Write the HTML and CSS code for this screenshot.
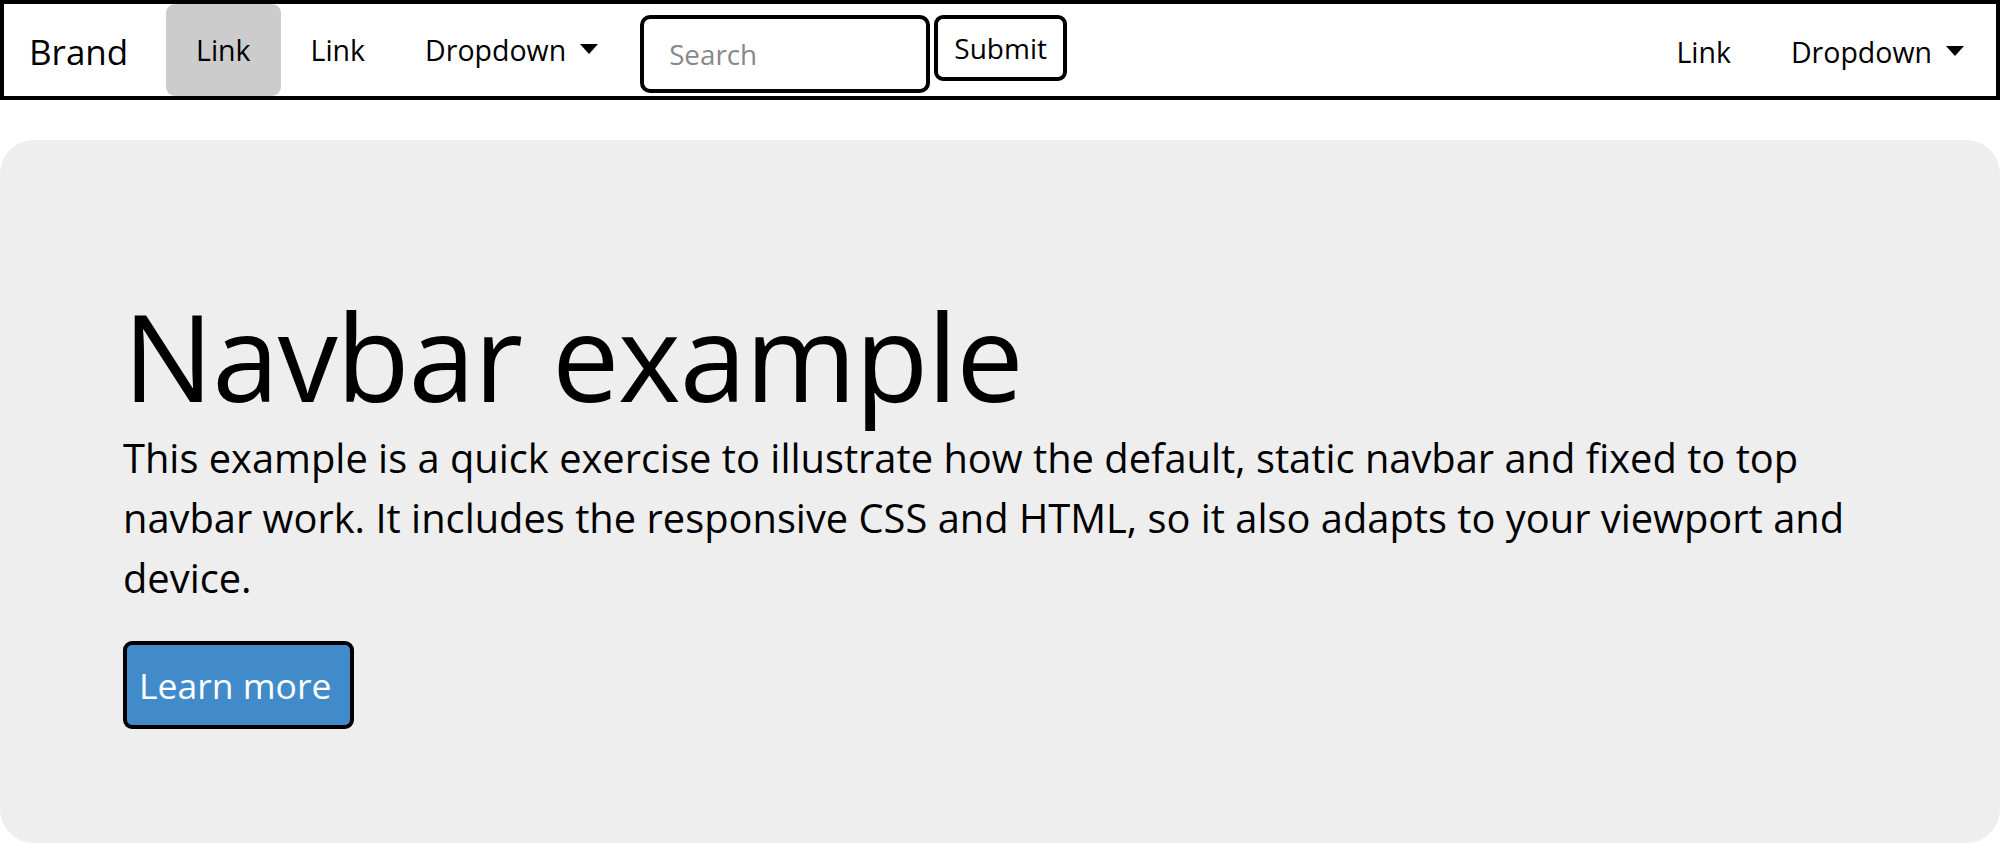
FILE: index.html
```html
<!DOCTYPE html>
<html lang="en">
<head>
<meta charset="utf-8">
<title>Navbar example</title>
<link rel="stylesheet" href="styles.css">
</head>
<body>
<nav class="navbar">
  <a class="brand" href="#">Brand</a>
  <ul class="nav">
    <li><a class="nav-link active" href="#">Link</a></li>
    <li><a class="nav-link" href="#">Link</a></li>
    <li><a class="nav-link dropdown" href="#">Dropdown<span class="caret"></span></a></li>
  </ul>
  <form class="search-form">
    <input class="search-input" type="text" placeholder="Search">
    <button class="submit-btn" type="button">Submit</button>
  </form>
  <ul class="nav nav-right">
    <li><a class="nav-link" href="#">Link</a></li>
    <li><a class="nav-link dropdown" href="#">Dropdown<span class="caret"></span></a></li>
  </ul>
</nav>
<main class="jumbotron">
  <h1 class="title">Navbar example</h1>
  <p class="lead">This example is a quick exercise to illustrate how the default, static navbar and fixed to top navbar work. It includes the responsive CSS and HTML, so it also adapts to your viewport and device.</p>
  <a class="learn-btn" href="#">Learn more</a>
</main>
</body>
</html>
```

FILE: styles.css
```css
html, body {
  margin: 0;
  padding: 0;
  background: #fff;
}

body {
  width: 2000px;
  font-family: "Open Sans", "Noto Sans", sans-serif;
  color: #000;
  overflow: hidden;
}

a {
  color: #000;
  text-decoration: none;
}

.navbar {
  box-sizing: border-box;
  display: flex;
  align-items: flex-start;
  height: 100px;
  border: 4px solid #000;
  padding-right: 2px;
  margin-bottom: 40px;
}

.brand {
  box-sizing: border-box;
  width: 162px;
  padding-left: 25px;
  padding-top: 4px;
  line-height: 88px;
  height: 92px;
  font-size: 35px;
}

.nav {
  display: flex;
  list-style: none;
  margin: 0;
  padding: 0;
}

.nav-link {
  display: flex;
  align-items: center;
  height: 92px;
  line-height: 92px;
  padding: 0 30px;
  font-size: 28.5px;
  border-radius: 9px;
}

.nav-link.active {
  background: #ccc;
}

.caret {
  display: inline-block;
  width: 0;
  height: 0;
  margin-left: 14px;
  margin-top: -2px;
  border-top: 10px solid #000;
  border-left: 9.5px solid transparent;
  border-right: 9.5px solid transparent;
}

.search-form {
  display: flex;
  align-items: flex-start;
  gap: 4px;
  margin: 11px 0 0 12px;
}

.search-input {
  box-sizing: border-box;
  width: 290px;
  height: 78px;
  border: 4px solid #000;
  border-radius: 10px;
  padding: 0 25px;
  font-family: "Open Sans", "Noto Sans", sans-serif;
  font-size: 27.8px;
  color: #000;
  background: #fff;
  outline: none;
}

.search-input::placeholder {
  color: #888;
}

.submit-btn {
  box-sizing: border-box;
  height: 66px;
  width: 133px;
  border: 4px solid #000;
  border-radius: 9px;
  padding: 0 14px;
  background: #fff;
  font-family: "Open Sans", "Noto Sans", sans-serif;
  font-size: 28px;
  color: #000;
}

.nav-right {
  margin-left: auto;
}

.nav-right .nav-link {
  height: 88px;
  line-height: 88px;
  padding-top: 4px;
}

.jumbotron {
  display: block;
  box-sizing: border-box;
  height: 703px;
  background: #eee;
  border-radius: 34px;
  padding: 150px 124px 0 123px;
}

.title {
  margin: 0;
  font-size: 120px;
  line-height: 132px;
  font-weight: 400;
  letter-spacing: -1.2px;
}

.lead {
  margin: 6px 0 33px;
  font-size: 39.85px;
  line-height: 60px;
}

.learn-btn {
  box-sizing: border-box;
  display: inline-flex;
  align-items: center;
  height: 88px;
  width: 231px;
  padding: 0 14px 0 12px;
  border: 4px solid #000;
  border-radius: 9px;
  background: #428bca;
  color: #fff;
  font-size: 35.5px;
}
```
